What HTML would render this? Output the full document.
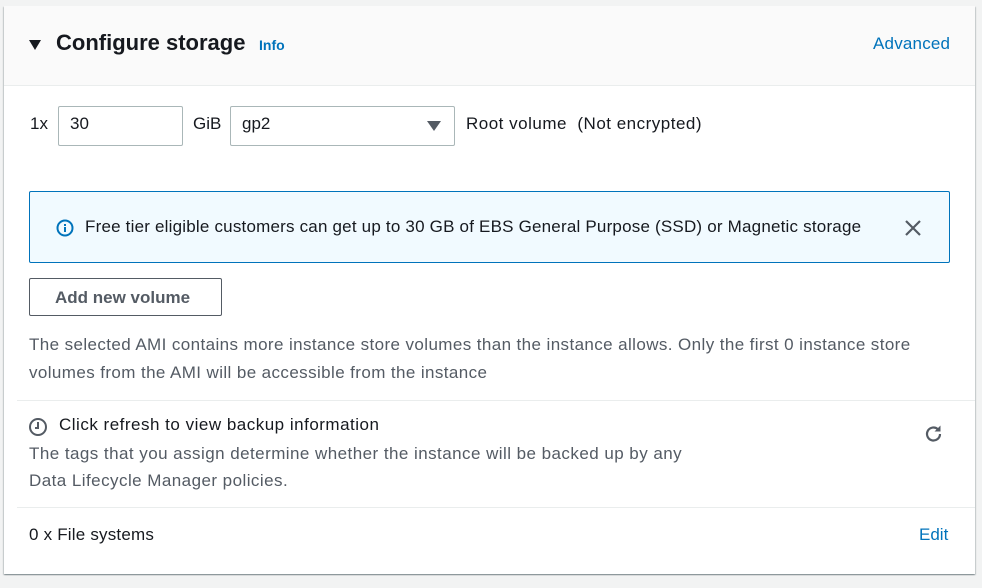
<!DOCTYPE html>
<html><head><style>
body{margin:0;background:#f2f3f3;font-family:"Liberation Sans",sans-serif;color:#16191f;font-size:17px;width:982px;height:588px;overflow:hidden;position:relative}
.card{position:absolute;left:4px;top:6px;width:971px;height:568px;background:#fff;box-shadow:0 1px 1px rgba(0,28,36,.3),1px 1px 1px rgba(0,28,36,.15),-1px 1px 1px rgba(0,28,36,.15)}
.hdr{position:absolute;left:0;top:0;width:971px;height:79px;background:#fafafa;border-bottom:1px solid #eaeded}
.a{position:absolute;white-space:nowrap}
.box{position:absolute;border:1px solid #aab7b8;border-radius:2px;background:#fff}
.grey{color:#545b64}
.link{color:#0073bb}
</style></head><body>
<div class="card">
<div class="hdr"></div>
<svg class="a" style="left:24px;top:33px" width="14" height="12"><path d="M1 1h12L7 11z" fill="#16191f"/></svg>
<div class="a" style="left:52px;top:24px;font-size:22px;font-weight:bold">Configure storage</div>
<div class="a link" style="left:255px;top:31px;font-size:14px;font-weight:bold">Info</div>
<div class="a link" style="left:869px;top:28px;letter-spacing:0.2px">Advanced</div>

<div class="a" style="left:26px;top:108px">1x</div>
<div class="box" style="left:54px;top:100px;width:123px;height:38px"></div>
<div class="a" style="left:66px;top:108px">30</div>
<div class="a" style="left:189px;top:108px">GiB</div>
<div class="box" style="left:226px;top:100px;width:223px;height:38px"></div>
<div class="a" style="left:238px;top:108px">gp2</div>
<svg class="a" style="left:423px;top:115px" width="14" height="10"><path d="M0 0h14L7 10z" fill="#545b64"/></svg>
<div class="a" style="left:462px;top:108px;letter-spacing:0.5px">Root volume&nbsp; (Not encrypted)</div>

<div class="a" style="left:25px;top:185px;width:919px;height:70px;background:#f1faff;border:1px solid #0073bb;border-radius:2px"></div>
<svg class="a" style="left:52px;top:213px" width="18" height="18"><circle cx="9" cy="9" r="7.5" fill="none" stroke="#0073bb" stroke-width="2"/><rect x="8" y="8" width="2" height="5" fill="#0073bb"/><rect x="8" y="5" width="2" height="2" fill="#0073bb"/></svg>
<div class="a" style="left:81px;top:211px;letter-spacing:0.2px">Free tier eligible customers can get up to 30 GB of EBS General Purpose (SSD) or Magnetic storage</div>
<svg class="a" style="left:900px;top:213px" width="18" height="18"><path d="M2 2L16 16M16 2L2 16" stroke="#545b64" stroke-width="2.2"/></svg>

<div class="a" style="left:25px;top:272px;width:191px;height:36px;border:1px solid #545b64;border-radius:2px;background:#fff"></div>
<div class="a grey" style="left:51px;top:282px;font-weight:bold">Add new volume</div>

<div class="a grey" style="left:25px;top:325px;line-height:28px;letter-spacing:0.4px">The selected AMI contains more instance store volumes than the instance allows. Only the first 0 instance store<br>volumes from the AMI will be accessible from the instance</div>
<div class="a" style="left:13px;top:394px;width:958px;border-top:1px solid #eaeded"></div>
<svg class="a" style="left:24px;top:411px" width="20" height="20"><circle cx="10" cy="10" r="8" fill="none" stroke="#545b64" stroke-width="2"/><path d="M10 5v6H7" fill="none" stroke="#545b64" stroke-width="2"/></svg>
<div class="a" style="left:55px;top:409px;letter-spacing:0.5px">Click refresh to view backup information</div>
<svg class="a" style="left:919px;top:417px" width="22" height="22"><path d="M17 11a6.5 6.5 0 1 1-2-4.7" fill="none" stroke="#545b64" stroke-width="2.2"/><path d="M17.5 2.5v6h-6z" fill="#545b64"/></svg>
<div class="a grey" style="left:25px;top:434px;line-height:27px;letter-spacing:0.45px">The tags that you assign determine whether the instance will be backed up by any<br>Data Lifecycle Manager policies.</div>
<div class="a" style="left:13px;top:501px;width:958px;border-top:1px solid #eaeded"></div>
<div class="a" style="left:25px;top:519px;letter-spacing:0.2px">0 x File systems</div>
<div class="a link" style="left:915px;top:519px">Edit</div>
</div>
</body></html>
